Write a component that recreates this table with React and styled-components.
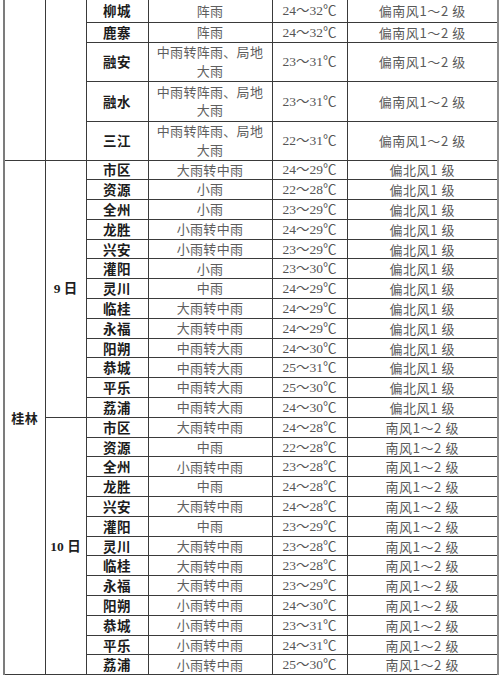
import styled, { createGlobalStyle } from 'styled-components';

const GlobalStyle = createGlobalStyle`
  html, body {
    margin: 0;
    padding: 0;
    background: #fff;
  }
  body {
    font-family: 'Noto Sans CJK SC', sans-serif;
  }
`;

const Page = styled.div`
  width: 500px;
  height: 678px;
  overflow: hidden;
  padding-left: 3px;
  box-sizing: border-box;
  background: #fff;
`;

const Table = styled.table`
  width: 494px;
  table-layout: fixed;
  border-collapse: collapse;
  border-left: 2px solid #7c7c7c;
  border-right: 2px solid #8c8c8c;
  border-bottom: 1px solid #333;
`;

const Row = styled.tr`
  height: ${(p) => p.h || 19.8}px;
`;

const Cell = styled.td`
  border: 1px solid #3a3a3a;
  padding: 0 4px;
  text-align: center;
  vertical-align: middle;
  font-size: 13px;
  line-height: 17px;
  overflow: hidden;
`;

const EmptyTop = styled(Cell)`
  border-top: none;
`;

const Region = styled(Cell)`
  font-size: 13px;
  font-weight: 700;
  color: #1e1e1e;
  letter-spacing: 0.5px;
`;

const Day = styled(Cell)`
  font-family: 'Liberation Serif', 'Noto Sans CJK SC', serif;
  font-size: 13.5px;
  font-weight: 700;
  color: #1e1e1e;
`;

const Place = styled(Cell)`
  font-size: 13.5px;
  font-weight: 700;
  color: #1c1c1c;
  letter-spacing: 0.6px;
  border-top: ${(p) => (p.first ? 'none' : '1px solid #3a3a3a')};
`;

const Weather = styled(Cell)`
  color: #5e5e5e;
  letter-spacing: 0.3px;
  line-height: 18.5px;
  border-top: ${(p) => (p.first ? 'none' : '1px solid #3a3a3a')};
`;

const Temp = styled(Cell)`
  font-family: 'Liberation Serif', 'Noto Sans CJK SC', serif;
  font-size: 13.5px;
  color: #555;
  border-top: ${(p) => (p.first ? 'none' : '1px solid #3a3a3a')};
`;

const Wind = styled(Cell)`
  color: #5a5a5a;
  letter-spacing: 0.6px;
  border-top: ${(p) => (p.first ? 'none' : '1px solid #3a3a3a')};
`;

const upper = [
  ['柳城', '阵雨', '24～32℃', 22],
  ['鹿寨', '阵雨', '24～32℃', 20],
  ['融安', '中雨转阵雨、局地大雨', '23～31℃', 39],
  ['融水', '中雨转阵雨、局地大雨', '23～31℃', 40],
  ['三江', '中雨转阵雨、局地大雨', '22～31℃', 39],
];

const day9 = [
  ['市区', '大雨转中雨', '24～29℃'],
  ['资源', '小雨', '22～28℃'],
  ['全州', '小雨', '23～29℃'],
  ['龙胜', '小雨转中雨', '24～29℃'],
  ['兴安', '小雨转中雨', '23～29℃'],
  ['灌阳', '小雨', '23～30℃'],
  ['灵川', '中雨', '24～29℃'],
  ['临桂', '大雨转中雨', '24～29℃'],
  ['永福', '大雨转中雨', '24～29℃'],
  ['阳朔', '中雨转大雨', '24～30℃'],
  ['恭城', '中雨转大雨', '25～31℃'],
  ['平乐', '中雨转大雨', '25～30℃'],
  ['荔浦', '中雨转大雨', '24～30℃'],
];

const day10 = [
  ['市区', '大雨转中雨', '24～28℃'],
  ['资源', '中雨', '22～28℃'],
  ['全州', '小雨转中雨', '23～28℃'],
  ['龙胜', '中雨', '24～28℃'],
  ['兴安', '大雨转中雨', '24～28℃'],
  ['灌阳', '中雨', '23～29℃'],
  ['灵川', '大雨转中雨', '23～28℃'],
  ['临桂', '大雨转中雨', '23～28℃'],
  ['永福', '大雨转中雨', '23～29℃'],
  ['阳朔', '小雨转中雨', '24～30℃'],
  ['恭城', '小雨转中雨', '23～31℃'],
  ['平乐', '小雨转中雨', '24～31℃'],
  ['荔浦', '小雨转中雨', '25～30℃'],
];

const App = () => {
  return (
    <>
      <GlobalStyle />
      <Page>
        <Table>
          <colgroup>
            <col style={{ width: 41 }} />
            <col style={{ width: 41 }} />
            <col style={{ width: 62 }} />
            <col style={{ width: 124 }} />
            <col style={{ width: 75 }} />
            <col style={{ width: 151 }} />
          </colgroup>
          <tbody>
            {upper.map(([place, weather, temp, h], i) => (
              <Row key={`u${i}`} h={h}>
                {i === 0 && (
                  <>
                    <EmptyTop rowSpan={upper.length} />
                    <EmptyTop rowSpan={upper.length} />
                  </>
                )}
                <Place first={i === 0}>{place}</Place>
                <Weather first={i === 0}>{weather}</Weather>
                <Temp first={i === 0}>{temp}</Temp>
                <Wind first={i === 0}>偏南风1～2 级</Wind>
              </Row>
            ))}
            {day9.map(([place, weather, temp], i) => (
              <Row key={`a${i}`}>
                {i === 0 && (
                  <>
                    <Region rowSpan={day9.length + day10.length}>桂林</Region>
                    <Day rowSpan={day9.length}>9 日</Day>
                  </>
                )}
                <Place>{place}</Place>
                <Weather>{weather}</Weather>
                <Temp>{temp}</Temp>
                <Wind>偏北风1 级</Wind>
              </Row>
            ))}
            {day10.map(([place, weather, temp], i) => (
              <Row key={`b${i}`}>
                {i === 0 && <Day rowSpan={day10.length}>10 日</Day>}
                <Place>{place}</Place>
                <Weather>{weather}</Weather>
                <Temp>{temp}</Temp>
                <Wind>南风1～2 级</Wind>
              </Row>
            ))}
          </tbody>
        </Table>
      </Page>
    </>
  );
};

export default App;
